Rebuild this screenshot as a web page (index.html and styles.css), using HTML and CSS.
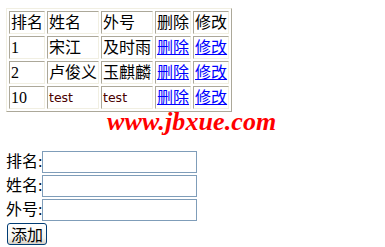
FILE: index.html
```html
<!DOCTYPE html>
<html lang="zh">
<head>
    <meta charset="UTF-8">
    <title>排名</title>
    <link rel="stylesheet" href="styles.css">
</head>
<body>

    <table class="list">
        <tr>
            <td>排名</td>
            <td>姓名</td>
            <td>外号</td>
            <td>删除</td>
            <td>修改</td>
        </tr>
        <tr>
            <td class="num">1</td>
            <td>宋江</td>
            <td>及时雨</td>
            <td><a href="#">删除</a></td>
            <td><a href="#">修改</a></td>
        </tr>
        <tr>
            <td class="num">2</td>
            <td>卢俊义</td>
            <td>玉麒麟</td>
            <td><a href="#">删除</a></td>
            <td><a href="#">修改</a></td>
        </tr>
        <tr>
            <td class="num">10</td>
            <td class="latin">test</td>
            <td class="latin">test</td>
            <td><a href="#">删除</a></td>
            <td><a href="#">修改</a></td>
        </tr>
    </table>

    <div class="logo">www.jbxue.com</div>

    <form class="add-form">
        <div class="row">排名:<input type="text" class="field"></div>
        <div class="row">姓名:<input type="text" class="field"></div>
        <div class="row">外号:<input type="text" class="field"></div>
        <div class="row"><button type="button" class="btn">添加</button></div>
    </form>

</body>
</html>
```

FILE: styles.css
```css
body {
    margin: 8px 6px;
    font-family: 'Liberation Serif', 'Noto Sans CJK SC', serif;
    font-size: 16px;
    color: #000;
    background: #fff;
    position: relative;
}
.list {
    border-collapse: separate;
    border-spacing: 2px;
    border: 1px solid;
    border-color: #f1efe2 #aca899 #aca899 #f1efe2;
}
.list td {
    border: 1px solid;
    border-color: #aca899 #f1efe2 #f1efe2 #aca899;
    padding: 1px;
    height: 19px;
    line-height: 19px;
    white-space: nowrap;
    vertical-align: middle;
}
.list td.num {
    width: 32px;
}
.list td.latin {
    font-family: 'DejaVu Sans', 'Noto Sans', sans-serif;
    font-size: 12.5px;
    color: #4a0000;
}
.list a {
    color: #0000ff;
    text-decoration: underline;
}
.logo {
    position: absolute;
    left: 101px;
    top: 105px;
    font-family: 'Liberation Serif', serif;
    font-style: italic;
    font-weight: bold;
    font-size: 26px;
    line-height: 18px;
    color: #ff0000;
    letter-spacing: 0.1px;
}
.add-form {
    margin-top: 39px;
    display: flex;
    flex-direction: column;
    gap: 2px;
}
.row {
    display: flex;
    align-items: center;
    height: 22px;
    line-height: 22px;
}
.field {
    box-sizing: border-box;
    width: 155px;
    height: 22px;
    margin: 0;
    border: 1px solid #7f9db9;
    padding: 1px 2px;
    font-size: 13px;
}
.btn {
    box-sizing: border-box;
    height: 22px;
    margin: 0 0 0 1px;
    padding: 0 3px;
    border: 1px solid #003c74;
    border-radius: 3px;
    background: linear-gradient(#ffffff, #f4f3ee 70%, #d6d0c5);
    font-family: 'Noto Sans CJK SC', sans-serif;
    font-size: 16px;
    line-height: 18px;
    color: #000;
}
```
